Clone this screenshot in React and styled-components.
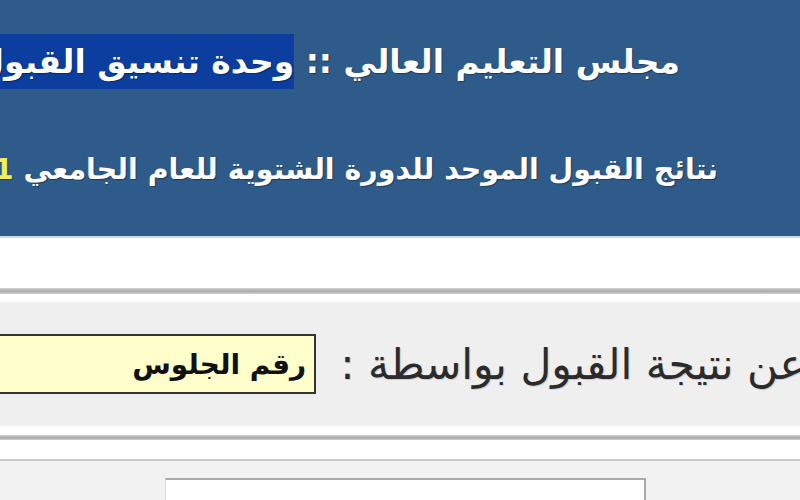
import React from 'react';
import styled, { createGlobalStyle } from 'styled-components';

const GlobalStyle = createGlobalStyle`
  html, body {
    margin: 0;
    padding: 0;
    background: #ffffff;
    overflow: hidden;
  }
  body {
    font-family: "DejaVu Sans", "Noto Sans", sans-serif;
  }
`;

const Page = styled.div`
  width: 800px;
  height: 500px;
  direction: rtl;
  overflow: hidden;
  background: #ffffff;
`;

const Header = styled.header`
  height: 238px;
  background: #2f5b8a;
  border-bottom: 2px solid #c6d8ec;
  display: flex;
  flex-direction: column;
  box-sizing: border-box;
  padding-top: 42px;
  gap: 71px;
  overflow: hidden;
`;

const TitleLine = styled.div`
  white-space: nowrap;
  color: #ffffff;
  font-weight: bold;
  font-size: ${(p) => p.size}px;
  line-height: 1.2;
  padding-right: ${(p) => p.indent}px;
  text-shadow: 1px 1px 1px rgba(0, 0, 0, 0.35);
`;

const Selected = styled.span`
  background: #0b3e9f;
  padding: 8px 0;
`;

const Year = styled.span`
  color: #f2ef5a;
`;

const Gap = styled.div`
  height: ${(p) => p.h}px;
`;

const Rule = styled.div`
  height: ${(p) => p.h}px;
  background: linear-gradient(#d4d4d4, #a9a9a9 50%, #cfcfcf);
`;

const SearchRow = styled.div`
  height: 124px;
  background: #efefef;
  display: flex;
  align-items: center;
  white-space: nowrap;
  overflow: hidden;
`;

const Label = styled.span`
  margin-right: -125px;
  font-size: 42.5px;
  color: #2b2b2b;
  text-shadow: 1px 1px 1px rgba(0, 0, 0, 0.15);
  flex-shrink: 0;
`;

const SelectBox = styled.div`
  flex-shrink: 0;
  margin-right: 24px;
  width: 420px;
  height: 60px;
  box-sizing: border-box;
  border: 2px solid #333333;
  background: #ffffcc;
  display: flex;
  align-items: center;
  padding-right: 8px;
  font-size: 28px;
  font-weight: bold;
  color: #111111;
`;

const Bottom = styled.div`
  height: 38px;
  background: #f2f2f2;
  border-top: 2px solid #c8c8c8;
  padding-top: 17px;
  padding-right: 154px;
`;

const TextInput = styled.div`
  width: 481px;
  height: 40px;
  box-sizing: border-box;
  background: #ffffff;
  border-top: 2px solid #a9a9a9;
  border-right: 2px solid #a9a9a9;
  border-left: 1px solid #dddddd;
`;

export default function App() {
  return (
    <>
      <GlobalStyle />
      <Page>
        <Header>
          <TitleLine size={33} indent={120}>
            مجلس التعليم العالي :: <Selected>وحدة تنسيق القبول الموحد</Selected>
          </TitleLine>
          <TitleLine size={28.5} indent={82}>
            نتائج القبول الموحد للدورة الشتوية للعام الجامعي <Year>2010/2011</Year>
          </TitleLine>
        </Header>
        <Gap h={50} />
        <Rule h={6} />
        <Gap h={8} />
        <SearchRow>
          <Label>البحث عن نتيجة القبول بواسطة :</Label>
          <SelectBox>رقم الجلوس</SelectBox>
        </SearchRow>
        <Gap h={9} />
        <Rule h={5} />
        <Gap h={19} />
        <Bottom>
          <TextInput />
        </Bottom>
      </Page>
    </>
  );
}
